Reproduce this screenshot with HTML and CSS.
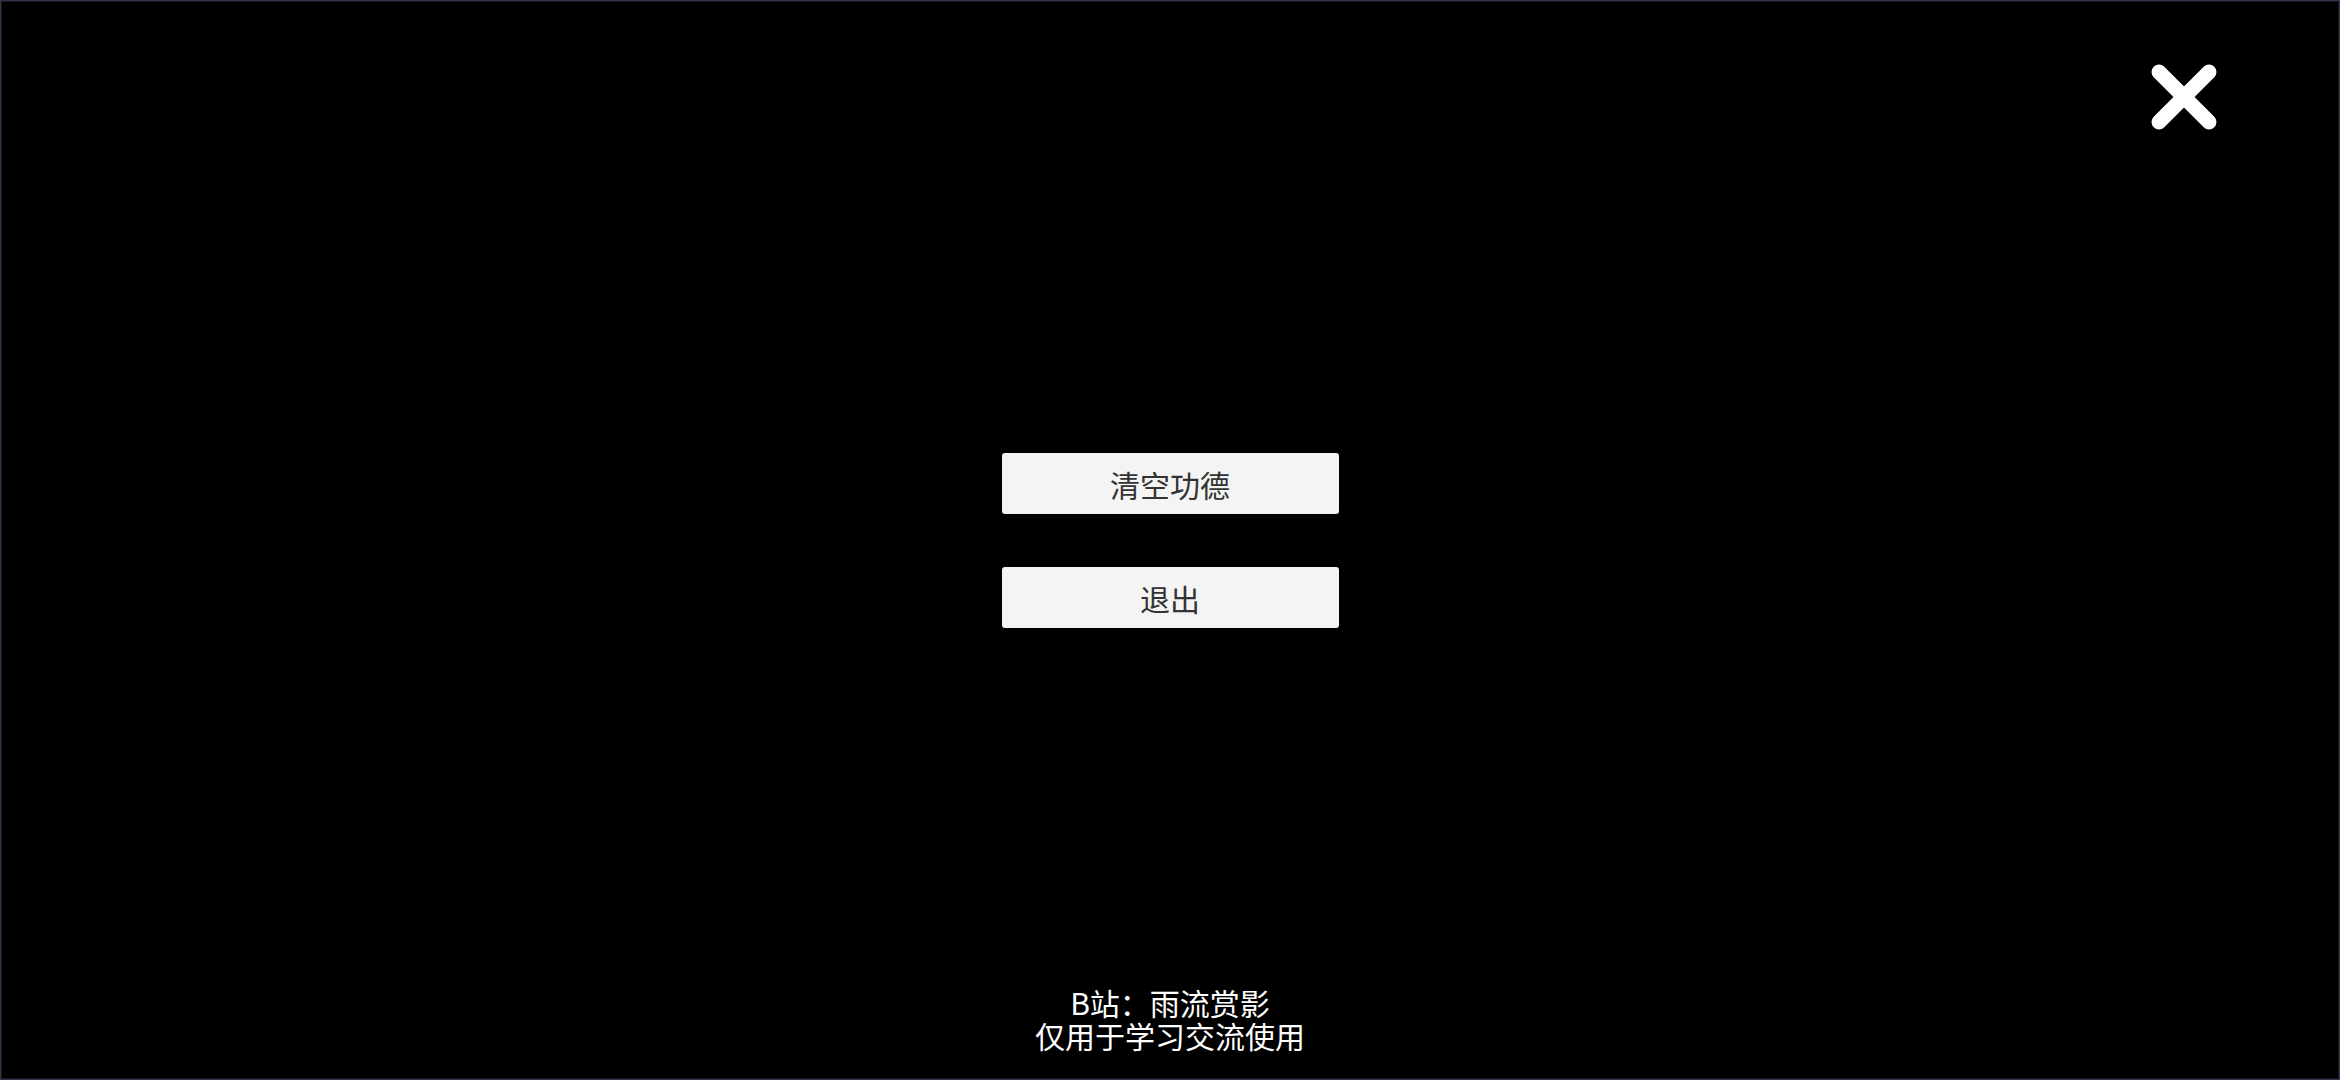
FILE: index.html
```html
<!DOCTYPE html>
<html lang="zh">
<head>
<meta charset="utf-8">
<title>功德</title>
<link rel="stylesheet" href="styles.css">
</head>
<body>
<div class="screen">
  <div class="topbar">
    <button class="close" aria-label="关闭">
      <svg viewBox="0 0 70 70" width="70" height="70">
        <path d="M10 10 L60 60 M60 10 L10 60" stroke="#fff" stroke-width="15" stroke-linecap="round" fill="none"/>
      </svg>
    </button>
  </div>
  <div class="menu">
    <button class="btn">清空功德</button>
    <button class="btn">退出</button>
  </div>
  <p class="footer">B站：雨流赏影<br>仅用于学习交流使用</p>
</div>
</body>
</html>
```

FILE: styles.css
```css
html, body {
  margin: 0;
  padding: 0;
  background: #000;
}
.screen {
  width: 2340px;
  height: 1080px;
  box-sizing: border-box;
  background: #000;
  border: 1px solid #34344a;
  box-shadow: inset 0 0 0 1px #15151f;
  display: flex;
  flex-direction: column;
  align-items: center;
  font-family: "Noto Sans CJK SC", "Noto Sans", sans-serif;
}
.topbar {
  align-self: stretch;
  display: flex;
  justify-content: flex-end;
  padding: 61px 120px 0 0;
  height: 70px;
}
.close {
  width: 70px;
  height: 70px;
  padding: 0;
  border: 0;
  background: transparent;
  display: flex;
  align-items: center;
  justify-content: center;
}
.menu {
  margin-top: 321px;
  display: flex;
  flex-direction: column;
  gap: 53px;
}
.btn {
  width: 337px;
  height: 61px;
  border: 0;
  border-radius: 3px;
  background: #f4f4f4;
  color: #333;
  font-family: "Noto Sans CJK SC", "Noto Sans", sans-serif;
  font-size: 30px;
  line-height: 1;
  padding: 0;
}
.footer {
  margin: auto 0 27px;
  color: #fff;
  font-size: 30px;
  line-height: 33px;
  text-align: center;
}
```
